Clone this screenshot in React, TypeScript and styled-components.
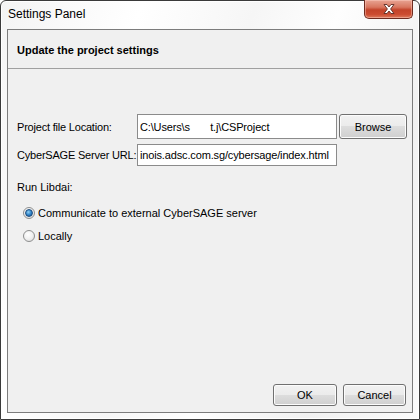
import React, { useState } from 'react'
import { styled, createGlobalStyle } from 'styled-components'

const GlobalStyle = createGlobalStyle`
  html, body {
    margin: 0;
    padding: 0;
    width: 420px;
    height: 420px;
    overflow: hidden;
    background: #ffffff;
  }
  * {
    box-sizing: border-box;
  }
`

const App = () => {
  const [mode, setMode] = useState('remote')
  const [location, setLocation] = useState('C:\\Users\\s       t.j\\CSProject')
  const [url, setUrl] = useState('inois.adsc.com.sg/cybersage/index.html')

  return (
    <>
      <GlobalStyle />
      <Window>
        <TitleBar>
          <Title>Settings Panel</Title>
          <CloseBtn aria-label="Close">
            <svg width="16" height="12" viewBox="0 0 16 12">
              <path
                d="M3 1.5 L6 1.5 L8 4 L10 1.5 L13 1.5 L9.6 6 L13 10.5 L10 10.5 L8 8 L6 10.5 L3 10.5 L6.4 6 Z"
                fill="#ffffff"
                stroke="#5b2a22"
                strokeWidth="0.9"
                strokeLinejoin="round"
              />
            </svg>
          </CloseBtn>
        </TitleBar>
        <Content>
          <Header>
            <HeaderText>Update the project settings</HeaderText>
          </Header>
          <Body>
            <Form>
              <Label>Project file Location:</Label>
              <Field $tall value={location} onChange={(e) => setLocation(e.target.value)} />
              <Button $w={68} $h={25}>Browse</Button>
              <Label>CyberSAGE Server URL:</Label>
              <Field value={url} onChange={(e) => setUrl(e.target.value)} />
            </Form>
            <Section>Run Libdai:</Section>
            <RadioList>
              <RadioRow onClick={() => setMode('remote')}>
                <Radio $checked={mode === 'remote'} />
                <RadioText>Communicate to external CyberSAGE server</RadioText>
              </RadioRow>
              <RadioRow onClick={() => setMode('local')}>
                <Radio $checked={mode === 'local'} />
                <RadioText>Locally</RadioText>
              </RadioRow>
            </RadioList>
          </Body>
          <Footer>
            <Button $w={64} $h={22}>OK</Button>
            <Button $w={63} $h={22}>Cancel</Button>
          </Footer>
        </Content>
      </Window>
    </>
  )
}

const Window = styled.div`
  width: 420px;
  height: 420px;
  display: flex;
  flex-direction: column;
  border: 1px solid #3a3a3a;
  border-radius: 6px 6px 0 0;
  background: linear-gradient(
    110deg,
    #f4f4f4 0%,
    #ffffff 25%,
    #f6f6f6 45%,
    #fefefe 60%,
    #f1f1f1 80%,
    #fbfbfb 100%
  );
  box-shadow: inset 0 0 0 1px #ffffff;
`

const TitleBar = styled.div`
  height: 28px;
  flex-shrink: 0;
  display: flex;
  justify-content: space-between;
  align-items: flex-start;
  padding: 0 6px 0 7px;
`

const Title = styled.div`
  font-family: 'Liberation Sans', Arial, sans-serif;
  font-size: 12px;
  color: #000000;
  line-height: 28px;
  margin-top: -1px;
`

const CloseBtn = styled.div`
  width: 49px;
  height: 19px;
  margin-top: -1px;
  display: flex;
  align-items: center;
  justify-content: center;
  border: 1px solid #6e2b20;
  border-top: none;
  border-radius: 0 0 5px 5px;
  background: linear-gradient(
    to bottom,
    #e8a493 0%,
    #d8765f 40%,
    #c3432a 55%,
    #cc4c31 80%,
    #dc7a5d 100%
  );
  box-shadow: inset 0 0 0 1px rgba(255, 210, 200, 0.45);
`

const Content = styled.div`
  flex: 1;
  margin: 0 6px 6px 6px;
  border: 1px solid #7c7c7c;
  background: #f0f0f0;
  display: flex;
  flex-direction: column;
`

const Header = styled.div`
  height: 39px;
  flex-shrink: 0;
  border-bottom: 1px solid #a0a0a0;
  display: flex;
  align-items: center;
  padding: 1px 0 0 9px;
`

const HeaderText = styled.div`
  font-family: 'Liberation Sans', Arial, sans-serif;
  font-size: 11px;
  font-weight: bold;
  color: #000000;
`

const Body = styled.div`
  flex: 1;
  padding: 45px 0 0 9px;
  font-family: 'Liberation Sans', Arial, sans-serif;
  font-size: 11px;
  color: #000000;
`

const Form = styled.div`
  display: grid;
  grid-template-columns: 118px 200px auto;
  column-gap: 2px;
  row-gap: 5px;
  align-items: center;
`

const Label = styled.div`
  white-space: nowrap;
  letter-spacing: -0.2px;
`

const Field = styled.input<{ $tall?: boolean }>`
  width: 200px;
  height: ${(p) => (p.$tall ? '25px' : '22px')};
  border: 1px solid #8b8b8b;
  background: #ffffff;
  padding: 0 2px;
  font-family: 'Liberation Sans', Arial, sans-serif;
  font-size: 11px;
  letter-spacing: -0.15px;
  color: #000000;
  outline: none;
`

const Button = styled.button<{ $w: number; $h: number }>`
  width: ${(p) => p.$w}px;
  height: ${(p) => p.$h}px;
  border: 1px solid #707070;
  border-radius: 3px;
  background: linear-gradient(
    to bottom,
    #f2f2f2 0%,
    #ebebeb 49%,
    #dddddd 50%,
    #cfcfcf 100%
  );
  box-shadow: inset 0 0 0 1px #fcfcfc;
  font-family: 'Liberation Sans', Arial, sans-serif;
  font-size: 11px;
  color: #000000;
  padding: 0;
  cursor: pointer;
`

const Section = styled.div`
  margin-top: 14px;
  line-height: 14px;
`

const RadioList = styled.div`
  display: flex;
  flex-direction: column;
  gap: 9px;
  margin-top: 12px;
  padding-left: 6px;
`

const RadioRow = styled.div`
  display: flex;
  align-items: center;
  gap: 3px;
  height: 14px;
  cursor: pointer;
`

const Radio = styled.span<{ $checked: boolean }>`
  width: 12px;
  height: 12px;
  border-radius: 50%;
  border: 1px solid #8e8f8f;
  background: radial-gradient(circle at 40% 35%, #ffffff 0%, #f0f0f0 50%, #d6d6d6 100%);
  display: flex;
  align-items: center;
  justify-content: center;
  &::after {
    content: '';
    display: ${(p) => (p.$checked ? 'block' : 'none')};
    width: 6px;
    height: 6px;
    border-radius: 50%;
    background: radial-gradient(circle at 40% 35%, #8fd0f5 0%, #2a7fc5 55%, #1b4f8a 100%);
    border: 1px solid #1f4d7d;
  }
`

const RadioText = styled.span`
  line-height: 14px;
`

const Footer = styled.div`
  display: flex;
  justify-content: flex-end;
  gap: 6px;
  padding: 0 6px 6px 0;
`

export default App
